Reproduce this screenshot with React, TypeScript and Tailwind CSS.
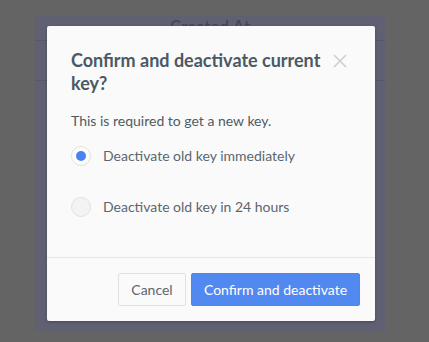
import { useState } from "react"

const options = [
  { id: "now", label: "Deactivate old key immediately" },
  { id: "later", label: "Deactivate old key in 24 hours" },
]

export default function App() {
  const [choice, setChoice] = useState("now")

  return (
    <div
      className="relative w-[429px] h-[342px] overflow-hidden bg-[#646464]"
      style={{ fontFamily: "Lato, 'Open Sans', sans-serif" }}
    >
      {/* page under the overlay */}
      <div className="ml-[35px] mt-[16px] w-[350px] h-[315px] bg-[#5f6172]">
        <div className="h-[25px] border-b border-[#565869] text-center text-[17px] font-semibold leading-[20px] text-[#464858]">
          <span className="relative top-[1px]">Created At</span>
        </div>
        <div className="h-[40px] border-b border-[#565869]" />
      </div>

      {/* modal */}
      <div className="absolute left-[47px] top-[26px] w-[328px] h-[295px] rounded-[2px] bg-[#fafafa] flex flex-col shadow-[0_1px_3px_rgba(0,0,0,0.25)]">
        <div className="flex-1 pl-[24px] pr-[28px] pt-[23px]">
          <div className="flex items-start justify-between">
            <h2 className="text-[18px] font-bold leading-[23px] text-[#4a5964] w-[258px]">
              Confirm and deactivate current key?
            </h2>
            <button className="mt-[5px] text-[#cfcfcf]">
              <svg width="14" height="14" viewBox="0 0 14 14" fill="none" stroke="currentColor" strokeWidth="1.6">
                <path d="M1 1L13 13M13 1L1 13" />
              </svg>
            </button>
          </div>
          <p className="mt-[16px] text-[14px] leading-[20px] text-[#4f5a63]">
            This is required to get a new key.
          </p>
          <div className="mt-[15px] flex flex-col gap-[31px]">
            {options.map((o) => {
              const on = choice === o.id
              return (
                <label
                  key={o.id}
                  className="flex items-center gap-[12px] cursor-pointer"
                  onClick={() => setChoice(o.id)}
                >
                  <span
                    className={`flex items-center justify-center w-[20px] h-[20px] rounded-full border border-[#e2e2e2] ${
                      on ? "bg-[#fbfbfb]" : "bg-[#f3f3f3]"
                    }`}
                  >
                    {on && <span className="w-[10px] h-[10px] rounded-full bg-[#4a82f1]" />}
                  </span>
                  <span className="text-[14px] leading-[20px] text-[#5a6670]">{o.label}</span>
                </label>
              )
            })}
          </div>
        </div>
        <div className="h-[64px] border-t border-[#e4e6e6] flex items-start justify-end gap-[5px] pt-[15px] pr-[15px]">
          <button className="h-[33px] w-[68px] rounded-[2px] border border-[#dde3e3] bg-[#fafafa] text-[14px] text-[#5a6670]">
            Cancel
          </button>
          <button className="h-[33px] w-[169px] rounded-[2px] border border-[#4f86ee] bg-[#5289f1] text-[14px] text-white">
            Confirm and deactivate
          </button>
        </div>
      </div>
    </div>
  )
}
